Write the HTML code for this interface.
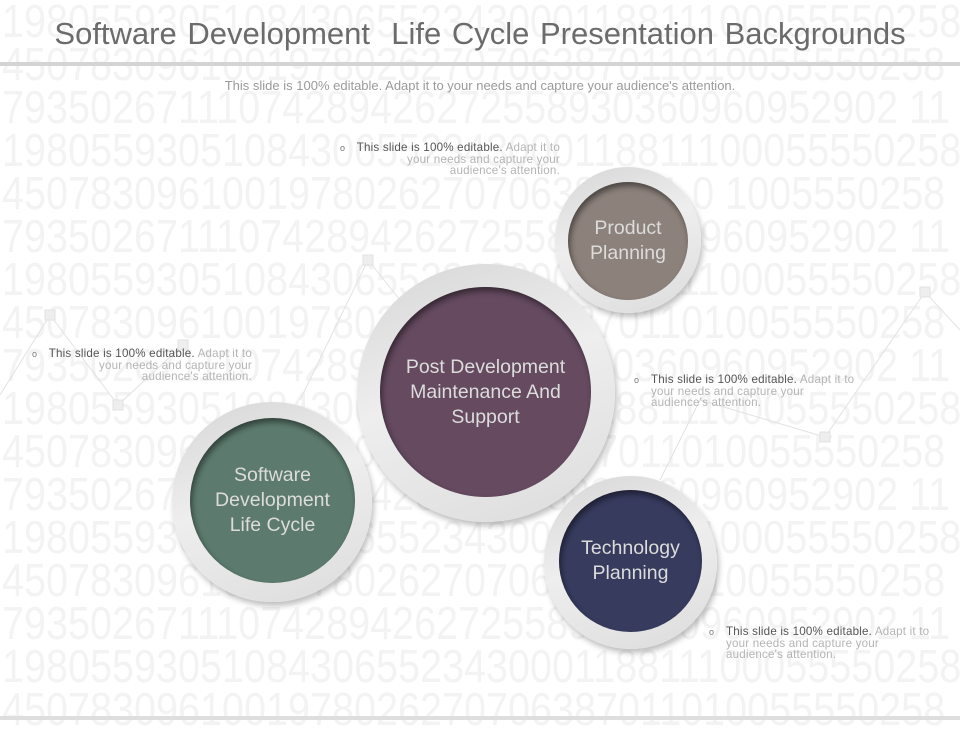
<!DOCTYPE html>
<html><head><meta charset="utf-8"><style>
*{margin:0;padding:0;box-sizing:border-box}
body{width:960px;height:720px;overflow:hidden;background:#fff;position:relative;font-family:"Liberation Sans",sans-serif}
.bg{position:absolute;left:2px;top:0;width:1200px;transform:scaleX(0.86);transform-origin:0 0}
.bg div{height:43px;line-height:43px;font-size:46px;color:#f3f3f3;white-space:nowrap}
svg.lines{position:absolute;left:0;top:0}
h1{position:absolute;top:16px;left:0;width:960px;text-align:center;font-weight:normal;font-size:31px;color:#6b6b6b;word-spacing:2px}
.rule{position:absolute;left:0;top:62px;width:960px;height:4px;background:#d4d4d4}
.sub{position:absolute;top:78px;left:0;width:960px;text-align:center;font-size:13px;color:#9a9a9a}
.ring{position:absolute;border-radius:50%;background:linear-gradient(160deg,#d6d6d6,#eeeeee 45%,#dcdcdc);box-shadow:2px 4px 6px rgba(0,0,0,.25)}
.in{position:absolute;border-radius:50%;box-shadow:inset 2px 4px 6px rgba(0,0,0,.45);color:#dcdcdc;display:flex;align-items:center;justify-content:center;text-align:center;font-size:19.5px;line-height:25px}
.t{position:absolute;font-size:11.6px;line-height:11.5px;color:#b4b4b4;letter-spacing:0.2px;white-space:nowrap}
.t b{font-weight:normal;color:#555}
.t i{font-style:normal;color:#777;position:absolute;font-size:9px}
.bot{position:absolute;left:0;top:716px;width:960px;height:4px;background:#dedede}
</style></head><body>
<div class="bg">
<div>19805593051084306552343000118811100055550258</div>
<div>4507830961001978026270706387011010055550258</div>
<div>79350267111074289426272558930360960952902 11</div>
<div>19805593051084306552343000118811100055550258</div>
<div>4507830961001978026270706387011 0 1005550258</div>
<div>79350267111074289426272558930360960952902 11</div>
<div>19805593051084306552343000118811100055550258</div>
<div>4507830961001978026270706387011010055550258</div>
<div>79350267111074289426272558930360960952902 11</div>
<div>19805593051084306552343000118811100055550258</div>
<div>4507830961001978026270706387011010055550258</div>
<div>79350267111074289426272558930360960952902 11</div>
<div>19805593051084306552343000118811100055550258</div>
<div>4507830961001978026270706387011010055550258</div>
<div>79350267111074289426272558930360960952902 11</div>
<div>19805593051084306552343000118811100055550258</div>
<div>4507830961001978026270706387011010055550258</div>
</div>
<svg class="lines" width="960" height="720">
<g stroke="#e2e2e2" fill="#eeeeee" stroke-width="1">
<polyline fill="none" points="0,395 50,315 118,405 183,345"/>
<polyline fill="none" points="300,400 368,260 400,300"/>
<polyline fill="none" points="660,480 700,400 825,437 925,292 960,330"/>
<rect x="45" y="310" width="10" height="10"/><rect x="113" y="400" width="10" height="10"/>
<rect x="178" y="340" width="10" height="10"/><rect x="363" y="255" width="10" height="10"/>
<rect x="820" y="432" width="10" height="10"/><rect x="920" y="287" width="10" height="10"/>
</g></svg>
<h1>Software Development&nbsp; Life Cycle Presentation Backgrounds</h1>
<div class="rule"></div>
<div class="sub">This slide is 100% editable. Adapt it to your needs and capture your audience's attention.</div>

<div class="ring" style="left:555px;top:167px;width:146px;height:146px"></div>
<div class="in" style="left:568px;top:182px;width:120px;height:118px;background:#8c817b">Product<br>Planning</div>

<div class="ring" style="left:357px;top:264px;width:258px;height:258px"></div>
<div class="in" style="left:380px;top:287px;width:211px;height:210px;background:#654a60">Post Development<br>Maintenance And<br>Support</div>

<div class="ring" style="left:172px;top:402px;width:200px;height:200px"></div>
<div class="in" style="left:190px;top:418px;width:165px;height:165px;background:#5c7a6e">Software<br>Development<br>Life Cycle</div>

<div class="ring" style="left:544px;top:476px;width:173px;height:173px"></div>
<div class="in" style="left:559px;top:490px;width:143px;height:142px;background:#373b5e">Technology<br>Planning</div>

<div class="t" style="left:340px;top:142px;width:220px;text-align:right"><i style="left:0;top:1px">o</i><b>This slide is 100% editable.</b> Adapt it to<br>your needs and capture your<br>audience's attention.</div>
<div class="t" style="left:32px;top:348px;width:220px;text-align:right"><i style="left:0;top:1px">o</i><b>This slide is 100% editable.</b> Adapt it to<br>your needs and capture your<br>audience's attention.</div>
<div class="t" style="left:651px;top:374px;width:220px"><i style="left:-17px;top:1px">o</i><b>This slide is 100% editable.</b> Adapt it to<br>your needs and capture your<br>audience's attention.</div>
<div class="t" style="left:726px;top:626px;width:220px"><i style="left:-17px;top:1px">o</i><b>This slide is 100% editable.</b> Adapt it to<br>your needs and capture your<br>audience's attention.</div>
<div class="bot"></div>
</body></html>
